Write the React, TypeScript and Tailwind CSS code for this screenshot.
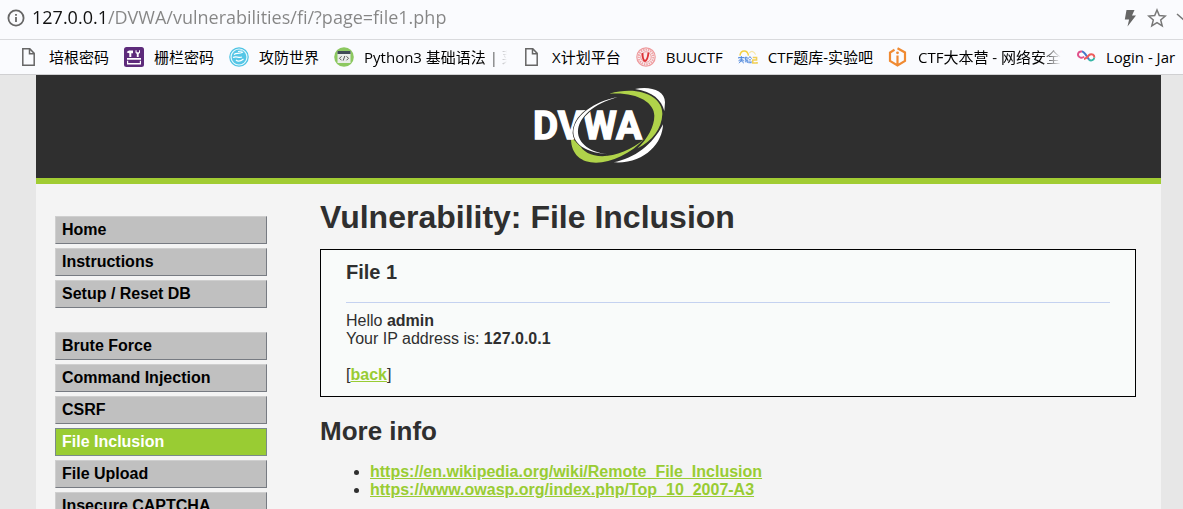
import React from "react";

type Bookmark = { label: string; icon: React.ReactNode; long?: boolean };

const Page = () => (
  <svg viewBox="0 0 20 20" className="size-5 shrink-0" fill="none" stroke="#666" strokeWidth="1.5">
    <path d="M3.800 1.800h7l4.400 4.600v11.800H3.800zM10.500 1.800v5h4.700" />
  </svg>
);

const Toolbox = () => (
  <svg viewBox="0 0 20 20" className="size-5 shrink-0">
    <rect width="20" height="20" rx="2.5" fill="#5d2b7b" />
    <g fill="#fff">
      <path d="M3 11h14v1.800H3zM3 13.800h1.200v2.200h11.600v-2.200H17v3.700H3z" />
      <path d="M2.800 5.500C3.500 3.600 5 3.200 9 3.600v2.600H7.300V10H5.300V6.200zM11.500 3.200v2.600l1.300 1.200v3h1.900V7L16 5.800V3.200h-1v2h-2.400v-2z" />
    </g>
  </svg>
);

const Globe = () => (
  <svg viewBox="0 0 20 20" className="size-5 shrink-0">
    <circle cx="10" cy="10" r="9.200" fill="#e6f8fd" stroke="#4fc4e4" strokeWidth="1.200" />
    <circle cx="10" cy="10" r="7.400" fill="#55c6e6" />
    <path d="M5 7.500c3-2 5 0 9-2.500M4 10.500c4-2 5 1 9-.5M7 13c2 2 5 1 7.500-1M9 4.500l4-.5" stroke="#fff" strokeWidth="1.200" fill="none" />
  </svg>
);

const Code = () => (
  <svg viewBox="0 0 20 20" className="size-5 shrink-0">
    <circle cx="10" cy="10" r="9.800" fill="#8cc860" />
    <rect x="3.500" y="4" width="13" height="12" fill="#e9ece9" />
    <rect x="3.500" y="4" width="13" height="3" fill="#3f4a55" />
    <path d="M7.500 9.300l-2 2 2 2M12.500 9.300l2 2-2 2M10.800 9l-1.600 4.600" stroke="#555" fill="none" />
  </svg>
);

const Seal = () => (
  <svg viewBox="0 0 20 20" className="size-5 shrink-0" fill="none">
    <circle cx="10" cy="10" r="9.200" stroke="#ee9a9d" strokeWidth="1.200" />
    <circle cx="10" cy="10" r="7.300" stroke="#f0a5a8" strokeWidth="2.200" strokeDasharray="1.600 0.800" />
    <circle cx="10" cy="10" r="5.300" fill="#fbe6e6" stroke="#eea0a2" />
    <path d="M6.500 6c0 4 1 7.500 2.500 8 2-.5 3-4 3.500-8.500" stroke="#dc3338" strokeWidth="1.900" />
  </svg>
);

const Lab = () => (
  <svg viewBox="0 0 21 20" className="size-5 shrink-0" fill="none">
    <path d="M2 8.500c1-6.500 8-6.500 9 0" stroke="#f4d03f" strokeWidth="1.500" />
    <path d="M12 6c2-3 5-2 6.500 1.500" stroke="#f7e6a6" strokeWidth="1.300" />
    <path
      d="M0.500 11.500v-1h6v1M3.500 9v5M1.500 12.300h4M0.500 14h6M3.500 14l-2.500 2.500M3.500 14l2.700 2.500M7.300 10.300h2.300l-.3 3.200M7.800 10.500v3h2.400v2.800M7.300 15h2M10.700 11.800l1.800-2.300 1.800 2.300M11.300 13h2.400M10.800 16h3.600M11.500 14.300l.4 1M13.800 14.300l-.6 1.500"
      stroke="#4f88dc"
    />
    <path d="M15.500 10.500h4v2.700h-4v3h4.500v-1" stroke="#f1cf55" strokeWidth="1.600" />
  </svg>
);

const Hexagon = () => (
  <svg viewBox="0 0 20 20" className="size-5 shrink-0" fill="none" stroke="#f08a32" strokeWidth="2.200">
    <path d="M6.500 2.800L2 5.500V14l7.500 4.500L17 14V5.500l-7.500-4.200M9.500 8.500v10" />
    <circle cx="9.500" cy="5.800" r="1.400" fill="#f08a32" stroke="none" />
  </svg>
);

const Loop = () => (
  <svg viewBox="0 0 20 20" className="size-5 shrink-0" fill="none" strokeWidth="2">
    <path d="M8 9.500C6 12 2.500 10.500 2 8 1.700 5.500 4 4 6 4.500" stroke="#e0518c" />
    <path d="M6 4.500c3 .5 4.500 5 7 8" stroke="#4678c8" />
    <path d="M13 12.500c2 2 5 .5 5.300-2" stroke="#35b6a5" />
    <path d="M18.300 10.500C18.500 8 16 6.500 14 7.500c-2 1-3.500 4.500-6 4.500" stroke="#ef5b5b" />
  </svg>
);

const bookmarks: Bookmark[] = [
  { label: "培根密码", icon: <Page /> },
  { label: "栅栏密码", icon: <Toolbox /> },
  { label: "攻防世界", icon: <Globe /> },
  { label: "Python3 基础语法 | 菜", icon: <Code />, long: true },
  { label: "X计划平台", icon: <Page /> },
  { label: "BUUCTF", icon: <Seal /> },
  { label: "CTF题库-实验吧", icon: <Lab /> },
  { label: "CTF大本营 - 网络安全", icon: <Hexagon />, long: true },
  { label: "Login - Jar", icon: <Loop /> },
];

const menu: string[][] = [
  ["Home", "Instructions", "Setup / Reset DB"],
  ["Brute Force", "Command Injection", "CSRF", "File Inclusion", "File Upload", "Insecure CAPTCHA"],
];

const links = [
  "https://en.wikipedia.org/wiki/Remote_File_Inclusion",
  "https://www.owasp.org/index.php/Top_10_2007-A3",
];

function AddressBar() {
  return (
    <div className="flex h-10 shrink-0 items-center border-b border-[#d9dadd] pb-1 pl-[7px]">
      <button aria-label="Site information" className="mr-1 shrink-0">
        <svg viewBox="0 0 18 18" className="size-[18px]" fill="none" stroke="#666" strokeWidth="1.800">
          <circle cx="9" cy="9" r="7.600" />
          <path d="M9 8v5M9 5v1.800" />
        </svg>
      </button>
      <input
        aria-label="Address"
        defaultValue="127.0.0.1/DVWA/vulnerabilities/fi/?page=file1.php"
        className="min-w-0 flex-1 bg-[linear-gradient(to_right,#111_79px,#858585_79px)] bg-clip-text px-[3px] font-['Open_Sans',sans-serif] text-[18px] text-transparent outline-none"
      />
      <div className="-mr-3 flex shrink-0 items-center gap-2">
        <button aria-label="Quick actions">
          <svg viewBox="0 0 18 18" className="size-[18px]" fill="#666">
            <path d="M5.500 1h8l-2.500 5.500h4L6.500 17.500l1.600-7H3.800z" />
          </svg>
        </button>
        <button aria-label="Add to favourites">
          <svg viewBox="0 0 20 20" className="size-5" fill="none" stroke="#777" strokeWidth="1.500">
            <path d="M10 2l2.300 5.500 6 .5-4.600 3.900 1.500 5.900L10 14.600l-5.200 3.200 1.500-5.900L1.700 8l6-.5z" />
          </svg>
        </button>
        <button aria-label="More">
          <svg viewBox="0 0 20 20" className="size-5" fill="none" stroke="#777" strokeWidth="1.500">
            <path d="M2 6l8 7 8-7" />
          </svg>
        </button>
      </div>
    </div>
  );
}

function BookmarkBar() {
  return (
    <nav
      aria-label="Bookmarks"
      className="flex h-[35px] shrink-0 items-center gap-[15px] overflow-hidden border-b border-[#d0d0d2] pl-[19px] font-['Open_Sans','Noto_Sans_CJK_SC',sans-serif] text-[15px] leading-6"
    >
      {bookmarks.map((b) => (
        <a key={b.label} href="#" className="flex shrink-0 items-center gap-[10px] text-black">
          {b.icon}
          <span
            className={
              b.long
                ? "w-[143px] overflow-hidden whitespace-nowrap mask-[linear-gradient(to_left,transparent,black_20px)]"
                : "whitespace-nowrap"
            }
          >
            {b.label}
          </span>
        </a>
      ))}
    </nav>
  );
}

function Logo() {
  return (
    <svg viewBox="60 33 408 234" className="h-[78px] w-[136px]" role="img" aria-label="DVWA">
      <path d="M372 42C415 32 462 45 462 82L460 108C452 75 425 50 372 42Z" fill="#fff" />
      <path d="M456 148C455 205 400 268 308 262C370 250 425 210 456 148Z" fill="#fff" />
      <path d="M295 56C385 30 456 65 454 118C452 160 425 198 380 220C410 190 430 155 430 122C430 80 375 50 295 56Z" fill="#b0d34a" />
      <path d="M180 190C180 295 320 280 402 190C330 255 225 262 204 205Z" fill="#b0d34a" />
      <text
        x="66"
        y="193"
        fill="#fff"
        stroke="#fff"
        strokeWidth="4"
        fontFamily="Roboto, sans-serif"
        fontWeight="700"
        fontSize="116"
      >
        DVWA
      </text>
      <path
        d="M320 66C172 95 128 225 292 238C162 222 172 108 320 66Z"
        fill="#fff"
        stroke="#2f2f2f"
        strokeWidth="5"
        paintOrder="stroke"
      />
    </svg>
  );
}

export default function App() {
  return (
    <div className="flex h-screen flex-col overflow-hidden bg-[#fafbfe]">
      <AddressBar />
      <BookmarkBar />
      <div className="min-h-0 flex-1 overflow-hidden bg-[#e7e7e7] pr-[22px] pl-9 font-['Liberation_Sans',Arial,sans-serif] text-base leading-[18px] text-[#2f2f2f]">
        <div className="min-h-full bg-[#f4f4f4]">
          <header className="flex justify-center border-b-6 border-[#a1cc33] bg-[#2f2f2f] pt-[11px] pb-[14px]">
            <Logo />
          </header>
          <div className="flex items-start">
            <nav aria-label="Main menu" className="ml-[19px] flex w-[212px] shrink-0 flex-col gap-6 pt-8">
              {menu.map((group) => (
                <ul key={group[0]} className="flex flex-col gap-1">
                  {group.map((item) => (
                    <li key={item}>
                      <a
                        href="#"
                        className={
                          item === "File Inclusion"
                            ? "block h-7 border border-[#7a8a8a] bg-[#99cc33] px-[6px] pt-1 font-bold text-white"
                            : "block h-7 border border-t-[#cfcfcf] border-r-[#777b82] border-b-[#777b82] border-l-[#cfcfcf] bg-[#c0c0c0] px-[6px] pt-1 font-bold text-black"
                        }
                      >
                        {item}
                      </a>
                    </li>
                  ))}
                </ul>
              ))}
            </nav>
            <main className="mr-[25px] ml-[53px] min-w-0 flex-1 pt-[13px]">
              <h1 className="text-[32px] leading-10 font-bold">Vulnerability: File Inclusion</h1>
              <section className="mt-3 border border-black bg-[#f9fbfa] px-[25px] pt-[10px] pb-3">
                <h2 className="text-xl leading-6 font-bold">File 1</h2>
                <hr className="mt-[18px] mb-[9px] border-[#c5d2f0]" />
                <p>
                  Hello <b>admin</b>
                </p>
                <p>
                  Your IP address is: <b>127.0.0.1</b>
                </p>
                <p className="mt-[18px]">
                  [<a href="#" className="font-bold text-[#99cc33] underline">back</a>]
                </p>
              </section>
              <h2 className="mt-[18px] text-[26px] leading-8 font-bold">More info</h2>
              <ul className="mt-4 list-disc pl-[50px]">
                {links.map((url) => (
                  <li key={url}>
                    <a href={url} className="font-bold text-[#99cc33] underline">{url}</a>
                  </li>
                ))}
              </ul>
            </main>
          </div>
        </div>
      </div>
    </div>
  );
}
